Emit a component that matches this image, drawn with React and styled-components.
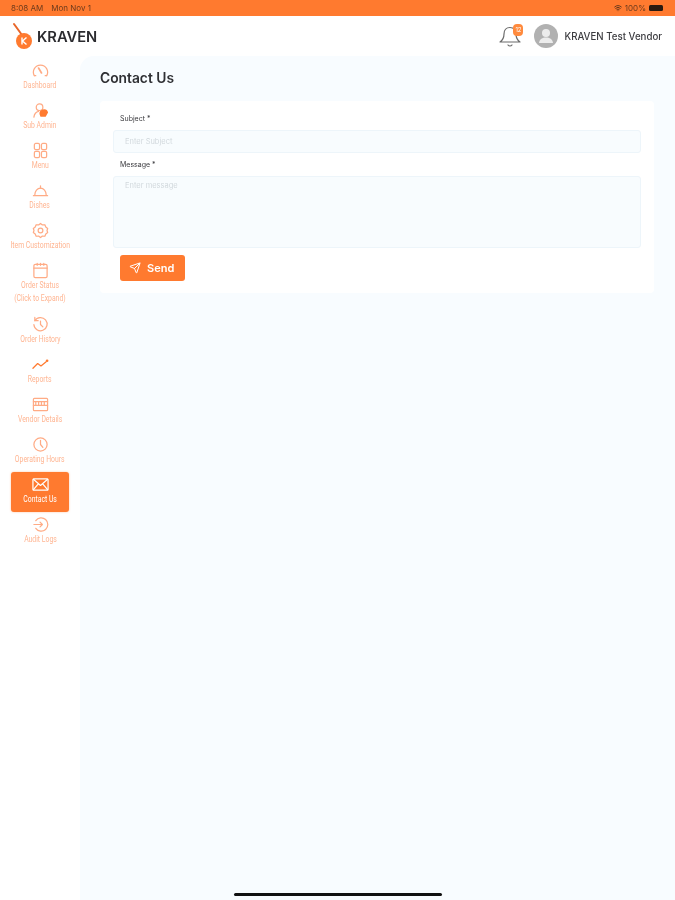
import React from "react";
import styled, { createGlobalStyle } from "styled-components";
import { Send, Wifi } from "lucide-react";

const GlobalStyle = createGlobalStyle`
  html, body {
    margin: 0;
    padding: 0;
    background: #fff;
    font-family: "Inter", "Liberation Sans", sans-serif;
  }
  * {
    box-sizing: border-box;
  }
`;

const Screen = styled.div`
  width: 675px;
  height: 900px;
  position: relative;
  overflow: hidden;
  display: flex;
  flex-direction: column;
  background: #fff;
  filter: blur(0.45px);
`;

const StatusBar = styled.div`
  height: 16px;
  flex: none;
  background: #ff7a2f;
  display: flex;
  align-items: center;
  justify-content: space-between;
  padding: 0 12px 0 11px;
  font-size: 8px;
  color: #6b3a1c;
`;

const StatusGroup = styled.div`
  display: flex;
  align-items: center;
  gap: ${({ $gap }) => $gap}px;
`;

const Battery = styled.span`
  width: 14px;
  height: 6px;
  border-radius: 1.5px;
  background: #2a1a10;
`;

const Header = styled.header`
  height: 40px;
  flex: none;
  display: flex;
  align-items: center;
  justify-content: space-between;
  padding: 0 13px 0 13px;
`;

const Brand = styled.div`
  display: flex;
  align-items: center;
  margin-top: 2px;
  font-size: 14.7px;
  font-weight: 600;
  color: #2b2b2f;
`;

const HeaderRight = styled.div`
  display: flex;
  align-items: center;
`;

const BellWrap = styled.div`
  position: relative;
  width: 24px;
  height: 24px;
  margin-right: 12px;
`;

const Badge = styled.span`
  position: absolute;
  top: 0;
  right: -1px;
  width: 10px;
  height: 12px;
  border-radius: 4px;
  background: #ff8a3d;
  color: #fff;
  font-size: 6px;
  line-height: 12px;
  text-align: center;
`;

const VendorName = styled.span`
  margin-left: 6px;
  font-size: 9.7px;
  font-weight: 500;
  color: #3c3c40;
`;

const Body = styled.div`
  flex: 1;
  display: flex;
  min-height: 0;
`;

const Sidebar = styled.nav`
  width: 80px;
  flex: none;
  padding: 2px 11px 0;
  display: flex;
  flex-direction: column;
  align-items: stretch;
`;

const NavItem = styled.div`
  height: ${({ $tall }) => ($tall ? 54 : 40)}px;
  display: flex;
  flex-direction: column;
  align-items: center;
  border-radius: 3px;
  background: ${({ $active }) => ($active ? "#ff7a2f" : "transparent")};
  color: ${({ $active }) => ($active ? "#fff" : "#ffb592")};
  box-shadow: ${({ $active }) =>
    $active ? "0 0 2px rgba(255, 122, 47, 0.5)" : "none"};
`;

const NavIcon = styled.svg`
  width: 17px;
  height: 17px;
  margin-top: 4px;
  flex: none;
  fill: none;
  stroke: ${({ $active }) => ($active ? "#fff" : "#ffab85")};
  stroke-width: 1.3;
  stroke-linecap: round;
  stroke-linejoin: round;
`;

const NavLabel = styled.span`
  margin-top: ${({ $second }) => ($second ? 0 : -0.5)}px;
  font-family: "Roboto", sans-serif;
  font-size: 9px;
  line-height: 13px;
  white-space: nowrap;
  text-align: center;
  transform: scaleX(0.76);
`;

const Main = styled.main`
  flex: 1;
  background: #f8fcff;
  border-top-left-radius: 14px;
  padding: 14px 21px 0 20px;
`;

const Title = styled.h1`
  margin: 0 0 14px;
  font-size: 13.8px;
  line-height: 17px;
  font-weight: 600;
  color: #2f3034;
`;

const Card = styled.section`
  height: 192px;
  background: #fff;
  border-radius: 4px;
  padding: 13px 13px 0;
`;

const FieldLabel = styled.label`
  display: block;
  margin-left: 7px;
  font-size: 7px;
  line-height: 10px;
  color: #3a3a3e;
`;

const Input = styled.div`
  height: ${({ $h }) => $h}px;
  margin-top: 6px;
  margin-bottom: 7px;
  padding: ${({ $area }) => ($area ? "4px 11px" : "0 11px")};
  display: flex;
  align-items: ${({ $area }) => ($area ? "flex-start" : "center")};
  background: #f8fcfe;
  border: 1px solid #edf5fa;
  border-radius: 3px;
  font-size: 7.5px;
  line-height: 10px;
  color: #d2d9dd;
`;

const SendButton = styled.button`
  width: 65px;
  height: 26px;
  margin: 0 0 0 7px;
  padding: 0 0 0 9px;
  display: flex;
  align-items: center;
  gap: 6px;
  border: none;
  border-radius: 3px;
  background: #ff7a2f;
  color: #fff;
  font-family: inherit;
  font-size: 11px;
  font-weight: 600;
`;

const HomeBar = styled.div`
  position: absolute;
  left: 234px;
  bottom: 4px;
  width: 208px;
  height: 3px;
  border-radius: 2px;
  background: #111;
`;

const icons = {
  dashboard: (
    <>
      <path d="M2.500 14.500a7.500 7.500 0 1 1 13 0" />
      <path d="M2.500 14.500h1.500M14 14.500h1.500" />
      <path d="M7 6.500l3 5" strokeWidth="2" />
    </>
  ),
  subAdmin: (
    <>
      <circle cx="8" cy="5.500" r="3.500" />
      <path d="M2 16c.5-3.500 2.500-5.500 5-6" />
      <path d="M8 13a4.500 4 0 0 1 9-2l-2.500 4.500H9z" fill="#ff7a2f" stroke="none" />
    </>
  ),
  menu: (
    <>
      <rect x="2.500" y="1.500" width="5.500" height="6.500" rx="1.500" />
      <rect x="10" y="1.500" width="5.500" height="6.500" rx="1.500" />
      <rect x="2.500" y="10" width="5.500" height="6.500" rx="1.500" />
      <rect x="10" y="10" width="5.500" height="6.500" rx="1.500" />
    </>
  ),
  dishes: (
    <>
      <path d="M3 13.500c0-4 2.600-7 6-7s6 3 6 7" />
      <path d="M1.500 14.500h15" />
      <path d="M9 4v2.500" />
    </>
  ),
  custom: (
    <>
      <path d="M9 1.500l2 1.600 2.600-.2 1 2.400 2 1.600-.7 2.100.7 2.100-2 1.600-1 2.400-2.600-.2-2 1.600-2-1.600-2.600.2-1-2.400-2-1.600.7-2.100-.7-2.100 2-1.600 1-2.400 2.600.2z" />
      <circle cx="9" cy="9" r="2.500" />
    </>
  ),
  order: (
    <>
      <rect x="2" y="2.500" width="14" height="14" rx="1.500" />
      <path d="M2 6.500h14M5.500 1.500v2M9 1.500v2M12.500 1.500v2" />
    </>
  ),
  history: (
    <>
      <path d="M3 5a7 7 0 1 1-1 4" />
      <path d="M3 1.500V5h3.500" />
      <path d="M9 5.500V9l2.500 2.500" />
    </>
  ),
  reports: (
    <>
      <path d="M1 13l5-5 3.500 2.500L15 6" stroke="#ff7a2f" />
      <circle cx="16" cy="5" r="1.400" fill="#ff7a2f" stroke="none" />
    </>
  ),
  vendor: (
    <>
      <rect x="1.500" y="2.500" width="15" height="13" rx="1" />
      <path d="M1.500 6h15M1.500 10h15" />
      <path d="M4 6v4M7 6v4M10 6v4M13 6v4" />
    </>
  ),
  hours: (
    <>
      <circle cx="9" cy="9" r="7" />
      <path d="M9 4.500V9l2.500 3" />
    </>
  ),
  contact: (
    <>
      <rect x="1" y="3" width="16" height="12" rx="1" />
      <path d="M1.500 3.500L9 10l7.500-6.500M1.500 14.500l5-6M16.500 14.500l-5-6" />
    </>
  ),
  audit: (
    <>
      <path d="M4 5a7 7 0 1 1 0 8" />
      <path d="M2 9h9M8.500 6.500L11 9l-2.500 2.500" />
    </>
  ),
};

const navItems = [
  { icon: "dashboard", label: "Dashboard" },
  { icon: "subAdmin", label: "Sub Admin" },
  { icon: "menu", label: "Menu" },
  { icon: "dishes", label: "Dishes" },
  { icon: "custom", label: "Item Customization" },
  { icon: "order", label: ["Order Status", "(Click to Expand)"], tall: true },
  { icon: "history", label: "Order History" },
  { icon: "reports", label: "Reports" },
  { icon: "vendor", label: "Vendor Details" },
  { icon: "hours", label: "Operating Hours" },
  { icon: "contact", label: "Contact Us", active: true },
  { icon: "audit", label: "Audit Logs" },
];

function Logo() {
  return (
    <svg width="24" height="30" viewBox="0 0 24 30">
      <path d="M1 2l8 11" stroke="#e8662a" strokeWidth="2" strokeLinecap="round" />
      <circle cx="11" cy="19" r="8" fill="#ff7a2f" />
      <path d="M9 15.500v7M13.500 15.500L9.500 19l4 3.500" stroke="#fff" strokeWidth="1.400" fill="none" />
    </svg>
  );
}

function Bell() {
  return (
    <svg width="24" height="24" viewBox="0 0 24 24" fill="none" stroke="#6b6b6b" strokeWidth="1.200" strokeLinecap="round" strokeLinejoin="round">
      <path d="M12 3.500c-4 0-6 3-6 6.500 0 4-1 6-4 8h20c-3-2-4-4-4-8 0-3.500-2-6.500-6-6.500z" />
      <path d="M10 21a2.500 2.500 0 0 0 4 0" />
    </svg>
  );
}

function Avatar() {
  return (
    <svg width="24" height="24" viewBox="0 0 24 24">
      <circle cx="12" cy="12" r="12" fill="#b1b1b1" />
      <circle cx="12" cy="9" r="4" fill="#ececec" />
      <path d="M5 19c.5-4 3.500-5.500 7-5.500s6.500 1.500 7 5.500z" fill="#ececec" />
    </svg>
  );
}

export default function App() {
  return (
    <Screen>
      <GlobalStyle />
      <StatusBar>
        <StatusGroup $gap={8}>
          <span>8:08 AM</span>
          <span>Mon Nov 1</span>
        </StatusGroup>
        <StatusGroup $gap={3}>
          <Wifi size={8} strokeWidth={3} />
          <span>100%</span>
          <Battery />
        </StatusGroup>
      </StatusBar>
      <Header>
        <Brand>
          <Logo />
          KRAVEN
        </Brand>
        <HeaderRight>
          <BellWrap>
            <Bell />
            <Badge>12</Badge>
          </BellWrap>
          <Avatar />
          <VendorName>KRAVEN Test Vendor</VendorName>
        </HeaderRight>
      </Header>
      <Body>
        <Sidebar>
          {navItems.map(({ icon, label, tall, active }) => (
            <NavItem key={icon} $tall={tall} $active={active}>
              <NavIcon viewBox="0 0 18 18" $active={active}>
                {icons[icon]}
              </NavIcon>
              {[].concat(label).map((line, i) => (
                <NavLabel key={line} $second={i > 0}>
                  {line}
                </NavLabel>
              ))}
            </NavItem>
          ))}
        </Sidebar>
        <Main>
          <Title>Contact Us</Title>
          <Card>
            <FieldLabel>Subject *</FieldLabel>
            <Input $h={23}>Enter Subject</Input>
            <FieldLabel>Message *</FieldLabel>
            <Input $h={72} $area>
              Enter message
            </Input>
            <SendButton>
              <Send size={12} />
              Send
            </SendButton>
          </Card>
        </Main>
      </Body>
      <HomeBar />
    </Screen>
  );
}
